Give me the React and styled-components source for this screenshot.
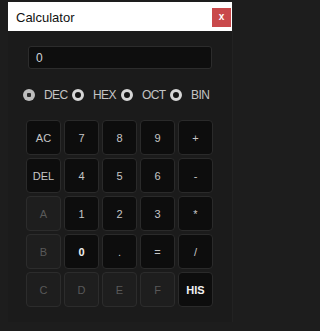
import React, { useState } from 'react';
import styled, { createGlobalStyle, css } from 'styled-components';

const GlobalStyle = createGlobalStyle`
  html, body {
    margin: 0;
    padding: 0;
    background: #1d1d1d;
  }
  body {
    font-family: "Liberation Sans", Arial, sans-serif;
  }
`;

const Window = styled.div`
  margin: 2px 0 0 8px;
  width: 224px;
  height: 320px;
  display: flex;
  flex-direction: column;
  background: #1b1b1b;
  box-shadow: 1px 1px 0 #222;
`;

const TitleBar = styled.div`
  height: 29px;
  background: #ffffff;
  display: flex;
  align-items: center;
  justify-content: space-between;
  padding: 0 1px 0 8px;
`;

const Title = styled.span`
  font-size: 13px;
  color: #111;
  padding-top: 1px;
`;

const CloseButton = styled.button`
  width: 19px;
  height: 19px;
  border: none;
  margin-top: 6px;
  align-self: flex-start;
  padding: 0 0 2px;
  background: #c9494b;
  color: #fff;
  font: bold 10px "Liberation Sans", Arial, sans-serif;
  cursor: pointer;
`;

const Body = styled.div`
  display: flex;
  flex-direction: column;
  padding: 15px 0 0;
`;

const Display = styled.div`
  margin: 0 20px;
  height: 23px;
  box-sizing: border-box;
  background: #0e0e0e;
  border: 1px solid #2c2c2c;
  border-radius: 3px;
  padding: 0 7px;
  display: flex;
  align-items: center;
  font-size: 12px;
  color: #cfd3d8;
`;

const ModeRow = styled.div`
  display: flex;
  margin: 20px 0 0 15px;
  height: 12px;
  align-items: center;
`;

const ModeItem = styled.label`
  width: 49px;
  display: flex;
  align-items: center;
  gap: 9px;
  font-size: 12px;
  letter-spacing: -0.6px;
  color: #c4c4c4;
  cursor: pointer;
`;

const Radio = styled.span`
  width: 12px;
  height: 12px;
  box-sizing: border-box;
  border-radius: 50%;
  flex-shrink: 0;
  ${(props) =>
    props.checked
      ? css`
          background: radial-gradient(circle, #2a2a2a 0 2px, #bdbdbd 2.5px);
        `
      : css`
          background: #141414;
          border: 3px solid #d6d6d6;
        `}
`;

const Keypad = styled.div`
  display: grid;
  grid-template-columns: repeat(5, 35px);
  grid-auto-rows: 35px;
  gap: 3px;
  margin: 19px 0 0 18px;
`;

const Key = styled.button`
  box-sizing: border-box;
  border: 1px solid #2a2a2a;
  border-radius: 4px;
  background: #0d0d0d;
  color: #c6c6c6;
  font: 11px "Liberation Sans", Arial, sans-serif;
  padding: 0;
  cursor: pointer;
  ${(props) =>
    props.bright &&
    css`
      color: #f2f2f2;
      font-weight: bold;
    `}
  ${(props) =>
    props.disabled &&
    css`
      background: #1e1e1e;
      border-color: #2c2c2c;
      color: #595959;
      cursor: default;
    `}
`;

const keys = [
  ['AC'], ['7'], ['8'], ['9'], ['+'],
  ['DEL'], ['4'], ['5'], ['6'], ['-'],
  ['A', 'off'], ['1'], ['2'], ['3'], ['*'],
  ['B', 'off'], ['0', 'bright'], ['.'], ['='], ['/'],
  ['C', 'off'], ['D', 'off'], ['E', 'off'], ['F', 'off'], ['HIS', 'bright'],
];

const modes = ['DEC', 'HEX', 'OCT', 'BIN'];

const App = () => {
  const [mode, setMode] = useState('DEC');

  return (
    <>
      <GlobalStyle />
      <Window>
        <TitleBar>
          <Title>Calculator</Title>
          <CloseButton>x</CloseButton>
        </TitleBar>
        <Body>
          <Display>0</Display>
          <ModeRow>
            {modes.map((m) => (
              <ModeItem key={m} onClick={() => setMode(m)}>
                <Radio checked={mode === m} />
                {m}
              </ModeItem>
            ))}
          </ModeRow>
          <Keypad>
            {keys.map(([label, kind]) => (
              <Key
                key={label}
                disabled={kind === 'off'}
                bright={kind === 'bright'}
              >
                {label}
              </Key>
            ))}
          </Keypad>
        </Body>
      </Window>
    </>
  );
};

export default App;
